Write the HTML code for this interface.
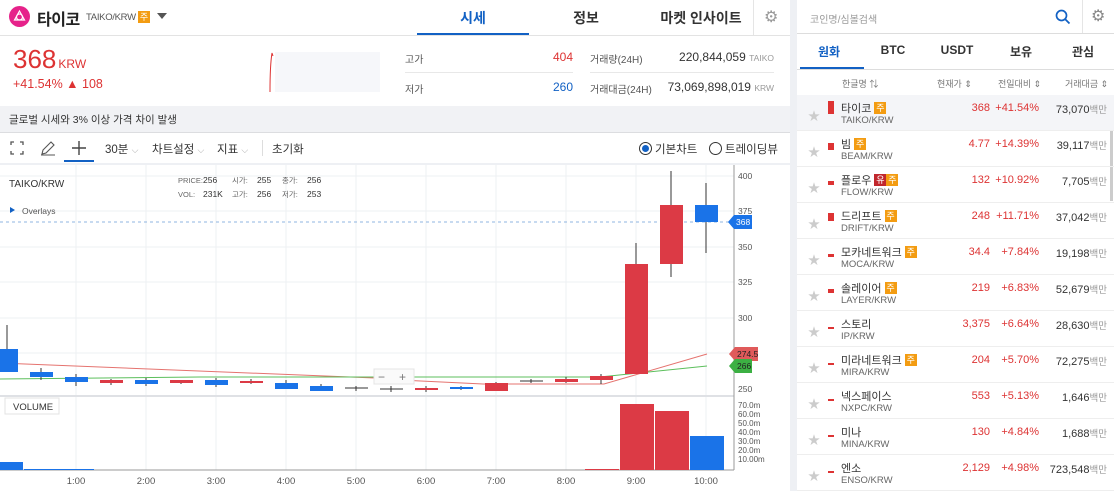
<!DOCTYPE html>
<html><head><meta charset="utf-8"><style>
*{box-sizing:border-box;margin:0;padding:0}
body{width:1114px;height:491px;overflow:hidden;background:#eef0f4;font-family:"Liberation Sans","Noto Sans CJK KR",sans-serif;color:#333;position:relative}
.abs{position:absolute}
.badge{display:inline-block;width:12px;height:12px;background:#f39c12;color:#fff;font-size:9px;line-height:12px;text-align:center;vertical-align:1px}
.badge.r{background:#c1272d}
#left{left:0;top:0;width:790px;height:491px;background:#fff}
#right{left:797px;top:0;width:317px;height:491px;background:#fff}
.row{position:absolute;left:0;width:317px;height:36px;border-bottom:1px solid #eee;font-size:11px}
.row .star{position:absolute;left:11px;top:12px;color:#ccc;font-size:12px}
.row .nm{position:absolute;left:44px;top:5px;font-size:11px;color:#333}
.row .sb{position:absolute;left:44px;top:20px;font-size:9.5px;color:#666}
.row .p{position:absolute;right:124px;top:7px;color:#d33;font-size:11px}
.row .c{position:absolute;right:75px;top:7px;color:#d33;font-size:11px}
.row .v{position:absolute;right:7px;top:7px;color:#333;font-size:11px}
.row .v span{color:#999;font-size:9.5px}
.mini{position:absolute;left:31px;top:9px;width:6px;background:#d33}
</style></head><body>
<div id="left" class="abs">
 <div class="abs" style="left:9px;top:6px;width:21px;height:21px;border-radius:50%;background:#e6228a"></div>
 <svg class="abs" style="left:12px;top:9px" width="15" height="15" viewBox="0 0 15 15"><g fill="none" stroke="#fff" stroke-width="1.2"><path d="M7.5 2 L12.5 11 L2.5 11 Z"/><circle cx="7.5" cy="8" r="3"/></g></svg>
 <div class="abs" style="left:37px;top:6px;font-size:16px;font-weight:bold;color:#222;letter-spacing:-0.5px">타이코</div>
 <div class="abs" style="left:86px;top:12px;font-size:9.5px;color:#555;letter-spacing:-0.3px">TAIKO/KRW</div>
 <span class="badge abs" style="left:138px;top:11px">주</span>
 <div class="abs" style="left:157px;top:13px;width:0;height:0;border-left:5px solid transparent;border-right:5px solid transparent;border-top:6px solid #555"></div>
 <div class="abs" style="left:417px;top:8px;width:112px;text-align:center;font-size:14px;font-weight:bold;color:#1261c4">시세</div>
 <div class="abs" style="left:417px;top:33px;width:112px;height:2px;background:#1261c4"></div>
 <div class="abs" style="left:530px;top:8px;width:112px;text-align:center;font-size:14px;font-weight:bold;color:#333">정보</div>
 <div class="abs" style="left:645px;top:8px;width:112px;text-align:center;font-size:14px;font-weight:bold;color:#333">마켓 인사이트</div>
 <div class="abs" style="left:753px;top:0;width:1px;height:35px;background:#e5e5e5"></div>
 <div class="abs" style="left:764px;top:7px;font-size:16px;color:#999">⚙</div>
 <div class="abs" style="left:0;top:35px;width:790px;height:1px;background:#e3e3e3"></div>
 <div class="abs" style="left:13px;top:44px;font-size:26px;color:#d33">368<span style="font-size:12px;margin-left:2px">KRW</span></div>
 <div class="abs" style="left:13px;top:77px;font-size:12.5px;color:#d33">+41.54% ▲ 108</div>
 <div class="abs" style="left:275px;top:52px;width:105px;height:40px;background:#f6f7fa"></div>
 <svg class="abs" style="left:268px;top:50px" width="10" height="42"><path d="M2 42 C2 30 2 15 4 3 L5 6" stroke="#d33" fill="none" stroke-width="1"/></svg>
 <div class="abs" style="left:405px;top:51px;font-size:10px;color:#555">고가</div>
 <div class="abs" style="left:520px;top:50px;width:53px;text-align:right;font-size:12px;color:#d33">404</div>
 <div class="abs" style="left:405px;top:72px;width:168px;height:1px;background:#e8e8e8"></div>
 <div class="abs" style="left:405px;top:81px;font-size:10px;color:#555">저가</div>
 <div class="abs" style="left:520px;top:80px;width:53px;text-align:right;font-size:12px;color:#1261c4">260</div>
 <div class="abs" style="left:590px;top:51px;font-size:10px;color:#555">거래량(24H)</div>
 <div class="abs" style="left:640px;top:50px;width:134px;text-align:right;font-size:12px;color:#333">220,844,059 <span style="font-size:8.5px;color:#999">TAIKO</span></div>
 <div class="abs" style="left:590px;top:72px;width:184px;height:1px;background:#e8e8e8"></div>
 <div class="abs" style="left:590px;top:81px;font-size:10px;color:#555">거래대금(24H)</div>
 <div class="abs" style="left:640px;top:80px;width:134px;text-align:right;font-size:12px;color:#333">73,069,898,019 <span style="font-size:8.5px;color:#999">KRW</span></div>
 <div class="abs" style="left:0;top:106px;width:790px;height:27px;background:#f1f2f5;border-bottom:1px solid #dcdde0"></div>
 <div class="abs" style="left:9px;top:112px;font-size:10.5px;color:#333">글로벌 시세와 3% 이상 가격 차이 발생</div>
 <svg class="abs" style="left:10px;top:141px" width="14" height="14"><path d="M1 4V1H4M10 1H13V4M13 10V13H10M4 13H1V10" stroke="#555" fill="none" stroke-width="1.3"/></svg>
 <svg class="abs" style="left:40px;top:140px" width="16" height="16"><path d="M2 14 L3 10 L11 2 L14 5 L6 13 Z M1 15H15" stroke="#555" fill="none" stroke-width="1.1"/></svg>
 <svg class="abs" style="left:71px;top:140px" width="16" height="16"><path d="M8 1V15M1 8H15" stroke="#444" stroke-width="1.4"/></svg>
 <div class="abs" style="left:64px;top:160px;width:30px;height:2px;background:#1261c4"></div>
 <div class="abs" style="left:105px;top:141px;font-size:11.5px;color:#333">30분 <span style="color:#aaa;font-size:9px">⌵</span></div>
 <div class="abs" style="left:152px;top:141px;font-size:11.5px;color:#333">차트설정 <span style="color:#aaa;font-size:9px">⌵</span></div>
 <div class="abs" style="left:217px;top:141px;font-size:11.5px;color:#333">지표 <span style="color:#aaa;font-size:9px">⌵</span></div>
 <div class="abs" style="left:262px;top:140px;width:1px;height:16px;background:#ddd"></div>
 <div class="abs" style="left:272px;top:141px;font-size:11.5px;color:#333">초기화</div>
 <div class="abs" style="left:639px;top:142px;width:13px;height:13px;border:1.3px solid #333;border-radius:50%"></div>
 <div class="abs" style="left:642px;top:145px;width:7px;height:7px;background:#1261c4;border-radius:50%"></div>
 <div class="abs" style="left:655px;top:141px;font-size:11.5px;color:#333">기본차트</div>
 <div class="abs" style="left:709px;top:142px;width:13px;height:13px;border:1.3px solid #333;border-radius:50%"></div>
 <div class="abs" style="left:725px;top:141px;font-size:11.5px;color:#333">트레이딩뷰</div>
 <div class="abs" style="left:0;top:163px;width:790px;height:2px;background:#eef0f4"></div>
 <svg class="abs" style="left:0;top:165px" width="790" height="326" viewBox="0 165 790 326" font-family="Liberation Sans,Noto Sans CJK KR,sans-serif">
  <g stroke="#eef0f3" stroke-width="1">
   <path d="M76 165V470M146 165V470M216 165V470M286 165V470M356 165V470M426 165V470M496 165V470M566 165V470M636 165V470M706 165V470"/>
   <path d="M0 176H734M0 211H734M0 247H734M0 282H734M0 318H734M0 353H734"/>
  </g>
  <path d="M0 396H734" stroke="#dfe1e5" stroke-width="2"/>
  <path d="M734 165V470M0 470H734" stroke="#999" stroke-width="1"/>
  <text x="9" y="187" font-size="10" fill="#333">TAIKO/KRW</text>
  <g font-size="7.5" fill="#666"><text x="178" y="183">PRICE:</text><text x="178" y="197">VOL:</text><text x="232" y="183">시가:</text><text x="232" y="197">고가:</text><text x="282" y="183">종가:</text><text x="282" y="197">저가:</text></g>
  <g font-size="8.5" fill="#333"><text x="203" y="183">256</text><text x="203" y="197">231K</text><text x="257" y="183">255</text><text x="257" y="197">256</text><text x="307" y="183">256</text><text x="307" y="197">253</text></g>
  <path d="M10 207L15 210L10 213Z" fill="#1261c4"/>
  <text x="22" y="214" font-size="8.5" fill="#555">Overlays</text>
  <path d="M0 222H734" stroke="#8fb4e0" stroke-dasharray="3,3"/>
  <path d="M0 363L375 378L400 380L483 384L604 384L707 354" stroke="#e5736f" fill="none"/>
  <path d="M0 379L200 377L600 377L707 366" stroke="#5cbf5c" fill="none"/>
  <g stroke="#333" stroke-width="1">
   <path d="M7 325V372M41 368V380M76 374V386M111 379V385M146 378V386M181 380V384M216 378V387M251 379V384M286 380V389M321 384V391M356 386V391M391 386V392M426 386V392M461 386V390M496 382V391M531 379V383M566 377V383M601 374V384M636 243V374M671 171V277M706 183V253"/>
  </g>
  <g fill="#1a73e8"><rect x="-5" y="349" width="23" height="23"/><rect x="30" y="372" width="23" height="5"/><rect x="65" y="377" width="23" height="5"/><rect x="135" y="380" width="23" height="4"/><rect x="205" y="380" width="23" height="5"/><rect x="275" y="383" width="23" height="6"/><rect x="310" y="386" width="23" height="5"/><rect x="450" y="387" width="23" height="2"/><rect x="695" y="205" width="23" height="17"/></g>
  <g fill="#dc3a45"><rect x="100" y="380" width="23" height="3"/><rect x="170" y="380" width="23" height="3"/><rect x="240" y="381" width="23" height="2"/><rect x="415" y="388" width="23" height="2"/><rect x="485" y="383" width="23" height="8"/><rect x="555" y="379" width="23" height="3"/><rect x="590" y="376" width="23" height="4"/><rect x="625" y="264" width="23" height="110"/><rect x="660" y="205" width="23" height="59"/></g>
  <path d="M345 388H368M380 389H403M520 381H543" stroke="#333"/>
  <rect x="374" y="369" width="40" height="15" fill="#fafafa" stroke="#e5e5e5"/>
  <text x="378" y="381" font-size="12" fill="#777">−</text><text x="399" y="381" font-size="12" fill="#777">+</text>
  <g font-size="8.5" fill="#555"><text x="738" y="179">400</text><text x="738" y="214">375</text><text x="738" y="250">350</text><text x="738" y="285">325</text><text x="738" y="321">300</text><text x="738" y="392">250</text></g>
  <path d="M728 222L734 215H752V229H734Z" fill="#1a73e8"/><text x="736" y="225" font-size="8.5" fill="#fff">368</text>
  <path d="M729 354L735 347H758V361H735Z" fill="#e05a5a"/><text x="737" y="357" font-size="8.5" fill="#222">274.5</text>
  <path d="M729 366L735 359H752V373H735Z" fill="#3cb043"/><text x="737" y="369" font-size="8.5" fill="#222">266</text>
  <g font-size="8" fill="#555"><text x="738" y="408">70.0m</text><text x="738" y="417">60.0m</text><text x="738" y="426">50.0m</text><text x="738" y="435">40.0m</text><text x="738" y="444">30.0m</text><text x="738" y="453">20.0m</text><text x="738" y="462">10.00m</text></g>
  <rect x="5" y="398" width="54" height="16" fill="#fff" stroke="#e3e3e3"/>
  <text x="13" y="410" font-size="9.5" fill="#333">VOLUME</text>
  <rect x="0" y="462" width="23" height="8" fill="#1a73e8"/>
  <rect x="24" y="469" width="70" height="1" fill="#1a73e8"/>
  <rect x="585" y="469" width="34" height="1" fill="#dc3a45"/>
  <rect x="620" y="404" width="34" height="66" fill="#dc3a45"/>
  <rect x="655" y="411" width="34" height="59" fill="#dc3a45"/>
  <rect x="690" y="436" width="34" height="34" fill="#1a73e8"/>
  <g font-size="9.5" fill="#555" text-anchor="middle"><text x="76" y="484">1:00</text><text x="146" y="484">2:00</text><text x="216" y="484">3:00</text><text x="286" y="484">4:00</text><text x="356" y="484">5:00</text><text x="426" y="484">6:00</text><text x="496" y="484">7:00</text><text x="566" y="484">8:00</text><text x="636" y="484">9:00</text><text x="706" y="484">10:00</text></g>
 </svg>
</div>
<div id="right" class="abs">
 <div class="abs" style="left:13px;top:11px;font-size:10px;color:#999">코인명/심볼검색</div>
 <svg class="abs" style="left:258px;top:9px" width="16" height="16"><circle cx="6.5" cy="6.5" r="5" stroke="#1261c4" stroke-width="1.7" fill="none"/><path d="M10 10L14.5 14.5" stroke="#1261c4" stroke-width="1.8"/></svg>
 <div class="abs" style="left:285px;top:0;width:1px;height:33px;background:#e5e5e5"></div>
 <div class="abs" style="left:294px;top:6px;font-size:16px;color:#888">⚙</div>
 <div class="abs" style="left:0;top:33px;width:317px;height:1px;background:#ddd"></div>
 <div class="abs" style="left:0;top:43px;width:64px;text-align:center;font-size:12px;font-weight:bold;color:#1261c4">원화</div>
 <div class="abs" style="left:3px;top:67px;width:64px;height:2px;background:#1261c4"></div>
 <div class="abs" style="left:64px;top:43px;width:64px;text-align:center;font-size:12px;font-weight:bold;color:#333">BTC</div>
 <div class="abs" style="left:128px;top:43px;width:64px;text-align:center;font-size:12px;font-weight:bold;color:#333">USDT</div>
 <div class="abs" style="left:192px;top:43px;width:64px;text-align:center;font-size:12px;font-weight:bold;color:#333">보유</div>
 <div class="abs" style="left:254px;top:43px;width:64px;text-align:center;font-size:12px;font-weight:bold;color:#333">관심</div>
 <div class="abs" style="left:0;top:69px;width:317px;height:1px;background:#ddd"></div>
 <div class="abs" style="left:0;top:70px;width:317px;height:25px;background:#fff;font-size:9px;color:#777">
  <span class="abs" style="left:45px;top:7px">한글명 ⇅</span><span class="abs" style="left:140px;top:7px">현재가 ⇕</span><span class="abs" style="left:201px;top:7px">전일대비 ⇕</span><span class="abs" style="left:268px;top:7px">거래대금 ⇕</span>
 </div>
 <div class="abs" style="left:313px;top:96px;width:3px;height:105px;background:#ccc"></div>
 <div class="row" style="top:95px;background:#f4f5f8"><span class="star">★</span><div class="mini" style="top:6px;height:13px"></div><span class="nm">타이코 <span class="badge">주</span></span><span class="sb">TAIKO/KRW</span><span class="p">368</span><span class="c">+41.54%</span><span class="v">73,070<span>백만</span></span></div>
 <div class="row" style="top:131px"><span class="star">★</span><div class="mini" style="top:12px;height:7px"></div><span class="nm">빔 <span class="badge">주</span></span><span class="sb">BEAM/KRW</span><span class="p">4.77</span><span class="c">+14.39%</span><span class="v">39,117<span>백만</span></span></div>
 <div class="row" style="top:167px"><span class="star">★</span><div class="mini" style="top:14px;height:4px"></div><span class="nm">플로우 <span class="badge r">유</span><span class="badge">주</span></span><span class="sb">FLOW/KRW</span><span class="p">132</span><span class="c">+10.92%</span><span class="v">7,705<span>백만</span></span></div>
 <div class="row" style="top:203px"><span class="star">★</span><div class="mini" style="top:10px;height:8px"></div><span class="nm">드리프트 <span class="badge">주</span></span><span class="sb">DRIFT/KRW</span><span class="p">248</span><span class="c">+11.71%</span><span class="v">37,042<span>백만</span></span></div>
 <div class="row" style="top:239px"><span class="star">★</span><div class="mini" style="top:15px;height:3px"></div><span class="nm">모카네트워크 <span class="badge">주</span></span><span class="sb">MOCA/KRW</span><span class="p">34.4</span><span class="c">+7.84%</span><span class="v">19,198<span>백만</span></span></div>
 <div class="row" style="top:275px"><span class="star">★</span><div class="mini" style="top:14px;height:4px"></div><span class="nm">솔레이어 <span class="badge">주</span></span><span class="sb">LAYER/KRW</span><span class="p">219</span><span class="c">+6.83%</span><span class="v">52,679<span>백만</span></span></div>
 <div class="row" style="top:311px"><span class="star">★</span><div class="mini" style="top:16px;height:2px"></div><span class="nm">스토리</span><span class="sb">IP/KRW</span><span class="p">3,375</span><span class="c">+6.64%</span><span class="v">28,630<span>백만</span></span></div>
 <div class="row" style="top:347px"><span class="star">★</span><div class="mini" style="top:16px;height:2px"></div><span class="nm">미라네트워크 <span class="badge">주</span></span><span class="sb">MIRA/KRW</span><span class="p">204</span><span class="c">+5.70%</span><span class="v">72,275<span>백만</span></span></div>
 <div class="row" style="top:383px"><span class="star">★</span><div class="mini" style="top:16px;height:2px"></div><span class="nm">넥스페이스</span><span class="sb">NXPC/KRW</span><span class="p">553</span><span class="c">+5.13%</span><span class="v">1,646<span>백만</span></span></div>
 <div class="row" style="top:419px"><span class="star">★</span><div class="mini" style="top:16px;height:2px"></div><span class="nm">미나</span><span class="sb">MINA/KRW</span><span class="p">130</span><span class="c">+4.84%</span><span class="v">1,688<span>백만</span></span></div>
 <div class="row" style="top:455px"><span class="star">★</span><div class="mini" style="top:16px;height:2px"></div><span class="nm">엔소</span><span class="sb">ENSO/KRW</span><span class="p">2,129</span><span class="c">+4.98%</span><span class="v">723,548<span>백만</span></span></div>
</div>
</body></html>
